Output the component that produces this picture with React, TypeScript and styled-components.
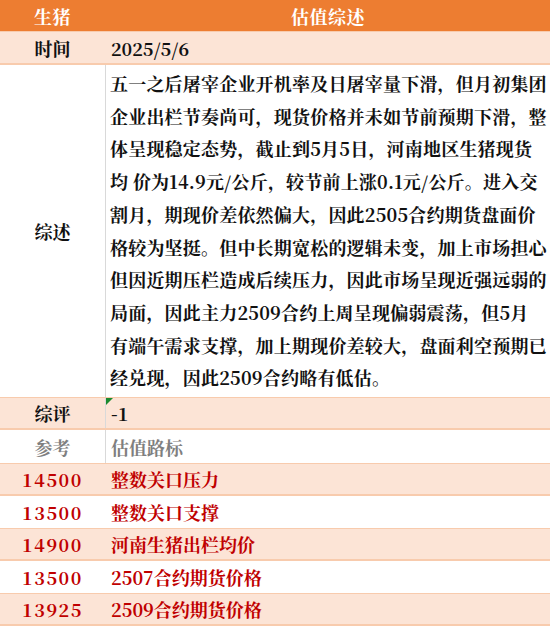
import React from 'react';
import styled, { createGlobalStyle } from 'styled-components';

const ORANGE = '#ED7D31';
const PEACH = '#FCE4D6';
const PEACH_LINE = '#F8CBAD';
const RED = '#C00000';
const GREY_TEXT = '#7F7F7F';
const DIVIDER = '#D9D9D9';

const GlobalStyle = createGlobalStyle`
  html, body {
    margin: 0;
    padding: 0;
    background: #ffffff;
  }
  body {
    font-family: "Noto Serif CJK SC", "Liberation Serif", "Noto Sans CJK SC", serif;
    font-weight: 700;
  }
`;

const Sheet = styled.div`
  width: 550px;
  height: 626px;
  overflow: hidden;
  display: flex;
  flex-direction: column;
`;

const Row = styled.div<{ $tone?: 'header' | 'peach' | 'plain'; $h?: number }>`
  display: flex;
  box-sizing: border-box;
  height: ${(p) => (p.$h ? `${p.$h}px` : 'auto')};
  flex-shrink: 0;
  background: ${(p) =>
    p.$tone === 'header' ? ORANGE : p.$tone === 'peach' ? PEACH : '#ffffff'};
  border-top: ${(p) => (p.$tone === 'peach' ? `1px solid ${PEACH_LINE}` : 'none')};
  border-bottom: ${(p) => (p.$tone === 'peach' ? `2px solid ${PEACH_LINE}` : 'none')};
`;

const Label = styled.div<{ $color?: string; $spaced?: boolean }>`
  width: 105px;
  flex-shrink: 0;
  display: flex;
  align-items: center;
  justify-content: center;
  font-size: 18px;
  letter-spacing: ${(p) => (p.$spaced ? '1.6px' : 'normal')};
  color: ${(p) => p.$color || '#111'};
`;

const Value = styled.div<{ $color?: string; $divider?: boolean; $center?: boolean }>`
  position: relative;
  flex: 1;
  display: flex;
  align-items: center;
  justify-content: ${(p) => (p.$center ? 'center' : 'flex-start')};
  padding-left: ${(p) => (p.$center ? '0' : '5px')};
  border-left: 1px solid ${(p) => (p.$divider ? DIVIDER : 'transparent')};
  font-size: 18px;
  color: ${(p) => p.$color || '#111'};
`;

const HeaderText = styled.span`
  color: #ffffff;
  font-size: 18px;
  letter-spacing: 0.5px;
`;

const Summary = styled.div`
  flex: 1;
  border-left: 1px solid ${DIVIDER};
  padding: 2px 0 0 4px;
  font-size: 18px;
  line-height: 32.7px;
  color: #111;
`;

const Line = styled.span`
  display: block;
  white-space: nowrap;
  letter-spacing: 0.2px;
`;

const Marker = styled.span`
  position: absolute;
  top: 0;
  left: 0;
  width: 0;
  height: 0;
  border-top: 7px solid #1B8A2F;
  border-right: 7px solid transparent;
`;

const summaryLines = [
  '五一之后屠宰企业开机率及日屠宰量下滑，但月初集团',
  '企业出栏节奏尚可，现货价格并未如节前预期下滑，整',
  '体呈现稳定态势，截止到5月5日，河南地区生猪现货',
  '均 价为14.9元/公斤，较节前上涨0.1元/公斤。进入交',
  '割月，期现价差依然偏大，因此2505合约期货盘面价',
  '格较为坚挺。但中长期宽松的逻辑未变，加上市场担心',
  '但因近期压栏造成后续压力，因此市场呈现近强远弱的',
  '局面，因此主力2509合约上周呈现偏弱震荡，但5月',
  '有端午需求支撑，加上期现价差较大，盘面利空预期已',
  '经兑现，因此2509合约略有低估。',
];

const markers = [
  { price: '14500', note: '整数关口压力' },
  { price: '13500', note: '整数关口支撑' },
  { price: '14900', note: '河南生猪出栏均价' },
  { price: '13500', note: '2507合约期货价格' },
  { price: '13925', note: '2509合约期货价格' },
];

const App = () => {
  return (
    <>
      <GlobalStyle />
      <Sheet>
        <Row $tone="header" $h={31}>
          <Label>
            <HeaderText>生猪</HeaderText>
          </Label>
          <Value $center>
            <HeaderText>估值综述</HeaderText>
          </Value>
        </Row>
        <Row $tone="peach" $h={34}>
          <Label>时间</Label>
          <Value>2025/5/6</Value>
        </Row>
        <Row $h={332}>
          <Label>综述</Label>
          <Summary>
            {summaryLines.map((line, i) => (
              <Line key={i}>{line}</Line>
            ))}
          </Summary>
        </Row>
        <Row $tone="peach" $h={33}>
          <Label>综评</Label>
          <Value $divider>
            <Marker />
            -1
          </Value>
        </Row>
        <Row $h={33}>
          <Label $color={GREY_TEXT}>参考</Label>
          <Value $divider $color={GREY_TEXT}>
            估值路标
          </Value>
        </Row>
        {markers.map((m, i) => (
          <Row key={i} $tone={i % 2 === 0 ? 'peach' : 'plain'} $h={i % 2 === 0 ? 33 : 32}>
            <Label $color={RED} $spaced>
              {m.price}
            </Label>
            <Value $color={RED}>{m.note}</Value>
          </Row>
        ))}
      </Sheet>
    </>
  );
};

export default App;
